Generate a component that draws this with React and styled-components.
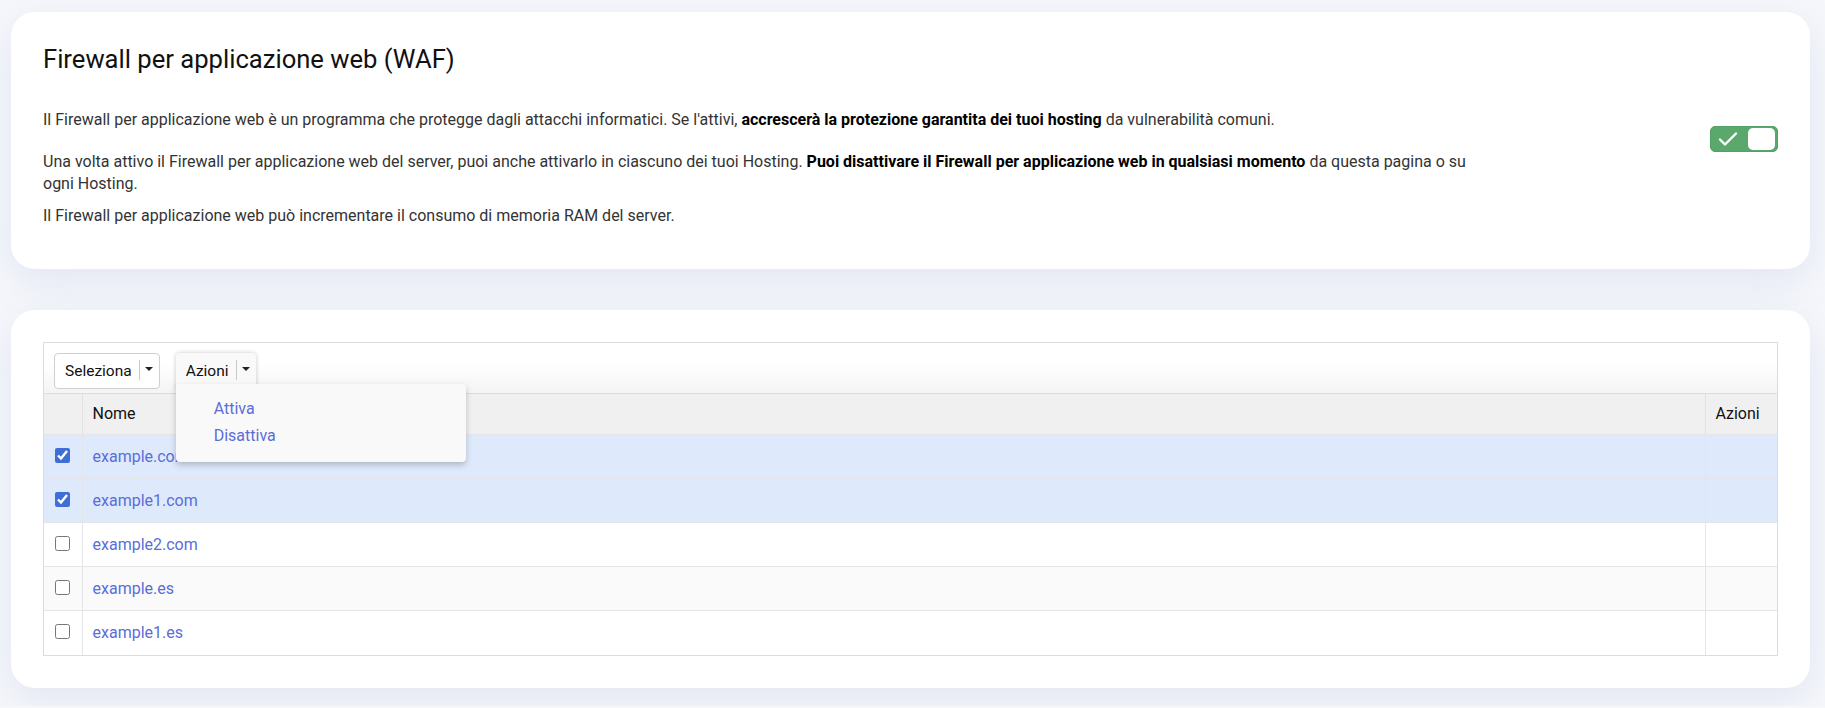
import styled, { createGlobalStyle } from "styled-components";

const GlobalStyle = createGlobalStyle`
  body {
    margin: 0;
    background: #f6f7fb;
    font-family: Roboto, "Liberation Sans", Arial, sans-serif;
    color: #333;
  }
  * { box-sizing: border-box; }
`;

const hostings = [
  { id: 1, name: "example.com", checked: true },
  { id: 2, name: "example1.com", checked: true },
  { id: 3, name: "example2.com", checked: false },
  { id: 4, name: "example.es", checked: false },
  { id: 5, name: "example1.es", checked: false },
];

const CheckIcon = () => (
  <svg width="20" height="16" viewBox="0 0 20 16" fill="none">
    <path d="M2 8.5 L7 13.5 L18 2.5" stroke="#fff" strokeWidth="2.4" strokeLinecap="round" strokeLinejoin="round" />
  </svg>
);

const App = () => {
  return (
    <StPage>
      <GlobalStyle />
      <StCard>
        <StTitle>Firewall per applicazione web (WAF)</StTitle>
        <StRow>
          <StTextCol>
            <StParagraph $gap="20px">
              Il Firewall per applicazione web è un programma che protegge dagli attacchi informatici. Se l'attivi,{" "}
              <strong>accrescerà la protezione garantita dei tuoi hosting</strong> da vulnerabilità comuni.
            </StParagraph>
            <StParagraph>
              Una volta attivo il Firewall per applicazione web del server, puoi anche attivarlo in ciascuno dei tuoi Hosting.{" "}
              <strong>Puoi disattivare il Firewall per applicazione web in qualsiasi momento</strong> da questa pagina o su ogni Hosting.
            </StParagraph>
            <StParagraph>
              Il Firewall per applicazione web può incrementare il consumo di memoria RAM del server.
            </StParagraph>
          </StTextCol>
          <StToggleCol>
            <StToggle type="button" aria-pressed="true">
              <CheckIcon />
              <StKnob />
            </StToggle>
          </StToggleCol>
        </StRow>
      </StCard>

      <StCard>
        <StTableBox>
          <StToolbar>
            <StSplitButton type="button">
              Seleziona
              <StDivider />
              <StCaret />
            </StSplitButton>
            <StMenuWrap>
              <StSplitButton type="button" $open>
                Azioni
                <StDivider />
                <StCaret />
              </StSplitButton>
              <StMenu>
                <StMenuItem href="#">Attiva</StMenuItem>
                <StMenuItem href="#">Disattiva</StMenuItem>
              </StMenu>
            </StMenuWrap>
          </StToolbar>
          <StTable>
            <thead>
              <tr>
                <StTh $width="38px" />
                <StTh>Nome</StTh>
                <StTh $width="72px">Azioni</StTh>
              </tr>
            </thead>
            <tbody>
              {hostings.map(({ id, name, checked }, i) => (
                <StTr key={id} $selected={checked} $striped={i % 2 === 1}>
                  <StCheckCell>
                    <StCheckbox type="checkbox" defaultChecked={checked} />
                  </StCheckCell>
                  <StTd>
                    <StLink href="#">{name}</StLink>
                  </StTd>
                  <StTd />
                </StTr>
              ))}
            </tbody>
          </StTable>
        </StTableBox>
      </StCard>
    </StPage>
  );
};

export default App;

const StPage = styled.div`
  display: flex;
  flex-direction: column;
  gap: 41px;
  padding: 12px 15px 18px 11px;
`;

const StCard = styled.section`
  background: #fff;
  border-radius: 24px;
  padding: 32px;
  box-shadow: 0 12px 40px rgba(120, 140, 200, 0.16);
`;

const StTitle = styled.h2`
  margin: 0 0 34px;
  font-size: 25.6px;
  line-height: 1.2;
  font-weight: 400;
  color: #111;
`;

const StRow = styled.div`
  display: flex;
`;

const StTextCol = styled.div`
  width: 1445px;
`;

const StParagraph = styled.p`
  margin: 0 0 ${({ $gap }) => $gap || "10px"};
  font-size: 16px;
  line-height: 22px;
  color: #333;
  strong {
    color: #000;
    font-weight: 700;
  }
`;

const StToggleCol = styled.div`
  flex: 1;
  display: flex;
  justify-content: flex-end;
  align-items: flex-start;
  padding-top: 17px;
`;

const StToggle = styled.button`
  display: flex;
  align-items: center;
  justify-content: space-between;
  width: 68px;
  height: 26px;
  padding: 0 2px 0 7px;
  border: 1px solid #55a066;
  border-radius: 5px;
  background: #5ba86d;
  cursor: pointer;
`;

const StKnob = styled.span`
  width: 27px;
  height: 22px;
  border-radius: 5px;
  background: #fff;
`;

const StTableBox = styled.div`
  border: 1px solid #dcdcdc;
`;

const StToolbar = styled.div`
  display: flex;
  gap: 16px;
  padding: 10px 10px 4px;
  background: linear-gradient(#fff 40%, #f4f4f4);
  border-bottom: 1px solid #dcdcdc;
`;

const StSplitButton = styled.button`
  display: inline-flex;
  align-items: center;
  height: 36px;
  padding: 0 6px 0 10px;
  font-family: inherit;
  font-size: 15.5px;
  color: #111;
  background: ${({ $open }) => ($open ? "#f9f9f9" : "#fff")};
  border: ${({ $open }) => ($open ? "none" : "1px solid #cfcfcf")};
  border-radius: ${({ $open }) => ($open ? "4px 4px 0 0" : "4px")};
  box-shadow: ${({ $open }) => ($open ? "0 0 4px rgba(0, 0, 0, 0.22)" : "none")};
  cursor: pointer;
`;

const StDivider = styled.span`
  width: 1px;
  height: 20px;
  margin: 0 5px 2px 7px;
  background: #c8c8c8;
`;

const StCaret = styled.span`
  width: 0;
  height: 0;
  margin-bottom: 3px;
  border-left: 4px solid transparent;
  border-right: 4px solid transparent;
  border-top: 4px solid #222;
`;

const StMenuWrap = styled.div`
  position: relative;
`;

const StMenu = styled.div`
  position: absolute;
  top: 31px;
  left: 0;
  z-index: 10;
  display: flex;
  flex-direction: column;
  width: 290px;
  padding: 11px 0 13px 38px;
  background: #f9f9f9;
  border-radius: 0 4px 4px 4px;
  box-shadow: 0 3px 6px rgba(0, 0, 0, 0.22);
`;

const StMenuItem = styled.a`
  font-size: 16px;
  line-height: 27px;
  color: #5b6dd8;
  text-decoration: none;
`;

const StTable = styled.table`
  width: 100%;
  border-collapse: collapse;
  font-size: 16px;
`;

const StTh = styled.th`
  width: ${({ $width }) => $width || "auto"};
  height: 41px;
  padding: 0 10px;
  text-align: left;
  font-weight: 400;
  color: #111;
  background: #f0f0f0;
  border-left: 1px solid #e2e2e2;
  &:first-child { border-left: none; }
`;

const StTr = styled.tr`
  background: ${({ $selected, $striped }) =>
    $selected ? "#deeafc" : $striped ? "#fafafa" : "#fff"};
`;

const StTd = styled.td`
  height: 44px;
  padding: 0 10px;
  border-top: 1px solid #e3e5e8;
  border-left: 1px solid #e3e5e8;
`;

const StCheckCell = styled.td`
  height: 44px;
  padding: 0;
  text-align: center;
  border-top: 1px solid #e3e5e8;
`;

const StCheckbox = styled.input`
  width: 15px;
  height: 15px;
  margin: 0 0 4px;
  vertical-align: middle;
  accent-color: #3f6fd6;
`;

const StLink = styled.a`
  color: #5b6dd8;
  text-decoration: none;
`;
